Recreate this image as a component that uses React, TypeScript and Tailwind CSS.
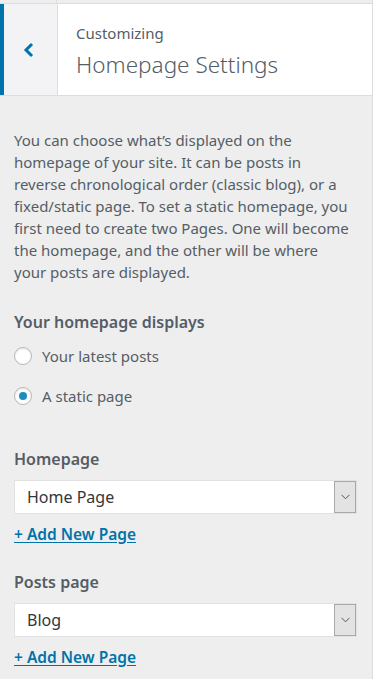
import React, { useState } from 'react';

const font = { fontFamily: '"Noto Sans", "Open Sans", Arial, sans-serif' };

const Radio: React.FC<{ label: string; checked: boolean; onClick: () => void }> = ({ label, checked, onClick }) => (
  <label className="flex items-center h-[24px] cursor-pointer" onClick={onClick}>
    <span className="w-[18px] h-[18px] rounded-full border border-[#b4b9be] bg-white shadow-[inset_0_1px_2px_rgba(0,0,0,0.1)] flex items-center justify-center">
      {checked && <span className="w-[8px] h-[8px] rounded-full bg-[#1e8cbe]" />}
    </span>
    <span className="ml-[10px] text-[15px] text-[#555d66]">{label}</span>
  </label>
);

const Dropdown: React.FC<{ value: string }> = ({ value }) => (
  <div className="flex h-[34px] bg-white border border-[#e2e2e2] mr-[1px]">
    <div className="flex-1 flex items-center pl-[12px] text-[16px] text-[#32373c]">{value}</div>
    <div className="w-[22px] bg-[#e3e3e3] border border-[#a8a8a8] flex items-center justify-center">
      <svg width="9" height="6" viewBox="0 0 9 6" fill="none">
        <path d="M0.5 0.8 L4.5 4.8 L8.5 0.8" stroke="#555" strokeWidth="1" />
      </svg>
    </div>
  </div>
);

const AddLink: React.FC = () => (
  <a href="#" className="inline-block mt-[9px] text-[15.5px] leading-[22px] font-semibold text-[#0073aa] underline underline-offset-2">
    + Add New Page
  </a>
);

export default function App() {
  const [choice, setChoice] = useState<'posts' | 'page'>('page');

  return (
    <div className="w-[373px] h-[679px] bg-[#eeeeee] overflow-hidden border-r border-[#dddddd]" style={font}>
      {/* strip from previous section */}
      <div className="h-[4px] border-b border-[#dddddd] flex">
        <div className="w-[57px] border-r border-[#dddddd]" />
      </div>

      {/* Header */}
      <div className="flex h-[92px] bg-white border-b border-[#dddddd]">
        <button className="w-[58px] bg-[#f3f3f5] border-l-[4px] border-[#0073aa] border-r border-r-[#dddddd] flex items-center justify-center">
          <svg width="12" height="16" viewBox="0 0 12 16" fill="none" className="ml-[-4px]">
            <path d="M9 2 L3 8 L9 14" stroke="#0073aa" strokeWidth="3" />
          </svg>
        </button>
        <div className="pl-[18px] pt-[18px]">
          <div className="text-[15px] text-[#555d66] leading-[22px]">Customizing</div>
          <div className="text-[22.5px] font-light text-[#555d66] leading-[30px] mt-[6px]">Homepage Settings</div>
        </div>
      </div>

      <div className="px-[14px] pt-[33px]">
        <p className="text-[15px] leading-[22px] text-[#555d66] pr-[5px]">
          You can choose what’s displayed on the homepage of your site. It can be posts in reverse chronological order (classic blog), or a fixed/static page. To set a static homepage, you first need to create two Pages. One will become the homepage, and the other will be where your posts are displayed.
        </p>

        <div className="mt-[28px] text-[16px] font-semibold text-[#555d66] leading-[22px]">Your homepage displays</div>
        <div className="mt-[11px] flex flex-col gap-[16px]">
          <Radio label="Your latest posts" checked={choice === 'posts'} onClick={() => setChoice('posts')} />
          <Radio label="A static page" checked={choice === 'page'} onClick={() => setChoice('page')} />
        </div>

        <div className="mt-[40px] text-[16px] font-semibold text-[#555d66] leading-[22px]">Homepage</div>
        <div className="mt-[10px]">
          <Dropdown value="Home Page" />
        </div>
        <AddLink />

        <div className="mt-[25px] text-[16px] font-semibold text-[#555d66] leading-[22px]">Posts page</div>
        <div className="mt-[10px]">
          <Dropdown value="Blog" />
        </div>
        <AddLink />
      </div>
    </div>
  );
}
